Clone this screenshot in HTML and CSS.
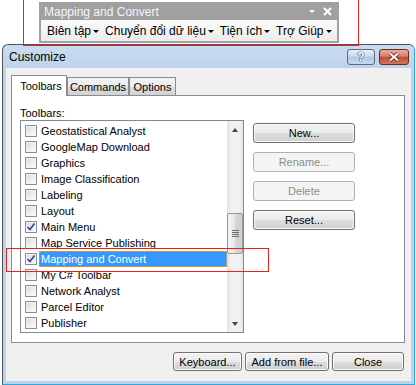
FILE: index.html
```html
<!DOCTYPE html>
<html lang="vi">
<head>
  <meta charset="UTF-8">
  <meta name="viewport" content="width=device-width, initial-scale=1.0">
  <title>Customize</title>
  <link rel="stylesheet" href="styles.css">
</head>
<body>
  <div class="toolbar">
    <div class="toolbar-title">
      <span>Mapping and Convert</span>
      <svg class="toolbar-ctrls" width="24" height="10" viewBox="0 0 24 10">
        <path d="M0 3 L6 3 L3 6 Z" fill="#fff"/>
        <path d="M15 1 L22 8 M22 1 L15 8" stroke="#fff" stroke-width="2.2"/>
      </svg>
    </div>
    <div class="toolbar-menu">
      <span class="menu-item">Biên tập<i class="caret"></i></span>
      <span class="menu-item">Chuyển đổi dữ liệu<i class="caret"></i></span>
      <span class="menu-item">Tiện ích<i class="caret"></i></span>
      <span class="menu-item">Trợ Giúp<i class="caret"></i></span>
    </div>
  </div>

  <div class="dialog">
    <div class="dialog-title">
      <span>Customize</span>
      <div class="caption-btns">
        <div class="cap cap-help">?</div>
        <div class="cap cap-close">
          <svg width="12" height="10" viewBox="0 0 12 10">
            <path d="M2 1.5 L10 8.5 M10 1.5 L2 8.5" stroke="#5a1d12" stroke-width="3.6"/>
            <path d="M2 1.5 L10 8.5 M10 1.5 L2 8.5" stroke="#fff" stroke-width="2"/>
          </svg>
        </div>
      </div>
    </div>

    <div class="dialog-body">
      <div class="tabs">
        <div class="tab active" style="width: 56px;">Toolbars</div>
        <div class="tab" style="width: 62px;">Commands</div>
        <div class="tab" style="width: 47px;">Options</div>
      </div>
      <div class="panel">
        <div class="panel-label">Toolbars:</div>
        <div class="panel-main">
          <div class="list">
            <div class="items" id="items"></div>
            <div class="scroll">
              <div class="scroll-btn"><i class="arrow-up"></i></div>
              <div class="scroll-track">
                <div class="thumb">
                  <svg width="7" height="7" viewBox="0 0 7 7">
                    <path d="M0 0.5 H7 M0 2.5 H7 M0 4.5 H7 M0 6.5 H7" stroke="#6b6b6b" stroke-width="1"/>
                  </svg>
                </div>
              </div>
              <div class="scroll-btn"><i class="arrow-down"></i></div>
            </div>
          </div>
          <div class="side-btns">
            <div class="btn">New...</div>
            <div class="btn disabled">Rename...</div>
            <div class="btn disabled">Delete</div>
            <div class="btn">Reset...</div>
          </div>
        </div>
      </div>
      <div class="footer">
        <div class="btn" style="width: 69px;">Keyboard...</div>
        <div class="btn" style="width: 84px;">Add from file...</div>
        <div class="btn" style="width: 72px;">Close</div>
      </div>
    </div>
  </div>

  <div class="mark mark-toolbar"></div>
  <div class="mark mark-row"></div>

  <script>
    const toolbars = [
      ["Geostatistical Analyst", false],
      ["GoogleMap Download", false],
      ["Graphics", false],
      ["Image Classification", false],
      ["Labeling", false],
      ["Layout", false],
      ["Main Menu", true],
      ["Map Service Publishing", false],
      ["Mapping and Convert", true, true],
      ["My C# Toolbar", false],
      ["Network Analyst", false],
      ["Parcel Editor", false],
      ["Publisher", false]
    ];
    const tick = '<svg width="10" height="10" viewBox="0 0 10 10"><path d="M1.5 5 L4 7.5 L8.5 1.5" fill="none" stroke="#2b4a9b" stroke-width="1.7"/></svg>';
    const list = document.getElementById("items");
    toolbars.forEach(function (t) {
      const row = document.createElement("div");
      row.className = "row";
      row.innerHTML = '<span class="check">' + (t[1] ? tick : "") + '</span>' +
        '<span class="row-text' + (t[2] ? ' selected' : '') + '">' + t[0] + '</span>';
      list.appendChild(row);
    });
  </script>
</body>
</html>
```

FILE: styles.css
```css
* {
  box-sizing: border-box;
}
body {
  margin: 0;
  width: 416px;
  height: 385px;
  overflow: hidden;
  position: relative;
  background: #ffffff;
  font-family: "Liberation Sans", Arial, sans-serif;
  font-size: 11px;
  color: #000;
}

/* floating toolbar */
.toolbar {
  margin: 2px 0 0 39px;
  width: 300px;
  background: #a0a0a0;
  padding: 1px 2px 2px;
}
.toolbar-title {
  height: 17px;
  display: flex;
  align-items: center;
  justify-content: space-between;
  padding: 0 4px 0 3px;
  color: #f6f6f6;
  font-size: 12px;
}
.toolbar-menu {
  height: 21px;
  display: flex;
  align-items: center;
  gap: 6px;
  padding-left: 6px;
  font-size: 12px;
  white-space: nowrap;
  background: linear-gradient(#fbfbfb, #ececec);
}
.menu-item {
  display: flex;
  align-items: center;
  flex-shrink: 0;
}
.caret {
  width: 0;
  height: 0;
  margin: 1px 0 0 2px;
  border-left: 3px solid transparent;
  border-right: 3px solid transparent;
  border-top: 3px solid #000;
}

/* dialog window */
.dialog {
  margin: 1px 0 0 2px;
  width: 413px;
  border: 1px solid #4a5361;
  border-right-color: #2fa6de;
  border-bottom-color: #2fa6de;
  border-radius: 6px 6px 0 0;
  background: linear-gradient(#cadcf1, #bdd3eb 24px, #bcd3ec);
  padding: 0 3px 3px;
}
.dialog-title {
  height: 23px;
  display: flex;
  align-items: center;
  justify-content: space-between;
  padding-left: 3px;
  font-size: 12px;
}
.caption-btns {
  display: flex;
  gap: 4px;
  margin: 1px 2px 0 0;
}
.cap {
  height: 16px;
  border: 1px solid #5b6a80;
  border-radius: 3px;
  display: flex;
  align-items: center;
  justify-content: center;
}
.cap-help {
  width: 28px;
  background: linear-gradient(#e4edf8, #cbdaee 45%, #b2c7e1 50%, #c4d8ef);
  color: #fff;
  font-weight: bold;
  font-size: 12px;
  text-shadow: 0 0 1px #2d3d55, 0 0 1px #2d3d55, 0 0 1px #2d3d55;
}
.cap-close {
  width: 30px;
  border-color: #6e2a1c;
  background: linear-gradient(#eaaa9c, #d6826f 45%, #c1482f 50%, #d27660);
}

.dialog-body {
  height: 313px;
  background: #f0f0f0;
  padding: 7px 6px 0 5px;
}
.tabs {
  display: flex;
  align-items: flex-end;
  height: 20px;
}
.tab {
  height: 18px;
  border: 1px solid #898c95;
  border-bottom: none;
  background: linear-gradient(#f3f3f3, #ebebeb 50%, #dddddd 51%, #d2d2d2);
  display: flex;
  align-items: center;
  justify-content: center;
  white-space: nowrap;
}
.tab.active {
  position: relative;
  z-index: 1;
  height: 21px;
  margin-bottom: -1px;
  background: #ffffff;
  padding-left: 4px;
}
.panel {
  height: 248px;
  border: 1px solid #898c95;
  background: #ffffff;
  padding: 10px 0 0 8px;
}
.panel-label {
  height: 14px;
  line-height: 14px;
}
.panel-main {
  display: flex;
  align-items: flex-start;
}

/* list with checkboxes */
.list {
  width: 224px;
  height: 213px;
  border: 1px solid #828790;
  display: flex;
}
.items {
  flex: 1;
  padding-top: 2px;
}
.row {
  height: 16px;
  display: flex;
  align-items: center;
  padding-left: 4px;
}
.check {
  width: 12px;
  height: 12px;
  border: 1px solid #8e8f8f;
  background: linear-gradient(135deg, #d8d8d8, #f4f4f4 70%, #ffffff);
  box-shadow: inset 0 0 0 1px #f4f4f4;
  display: flex;
  align-items: center;
  justify-content: center;
}
.row-text {
  flex: 1;
  height: 16px;
  line-height: 14px;
  margin-left: 2px;
  padding-left: 1px;
  border: 1px solid transparent;
  white-space: nowrap;
}
.row-text.selected {
  background: #3399ff;
  color: #ffffff;
  border: 1px dotted #e8a040;
}
.scroll {
  width: 16px;
  display: flex;
  flex-direction: column;
  background: linear-gradient(90deg, #e2e2e2, #f1f1f1 25%, #f1f1f1 75%, #e6e6e6);
}
.scroll-btn {
  height: 17px;
  display: flex;
  align-items: center;
  justify-content: center;
}
.arrow-up,
.arrow-down {
  width: 0;
  height: 0;
  border-left: 3px solid transparent;
  border-right: 3px solid transparent;
}
.arrow-up {
  border-bottom: 4px solid #444;
}
.arrow-down {
  border-top: 4px solid #444;
}
.scroll-track {
  flex: 1;
}
.thumb {
  margin: 75px 0 0 0;
  height: 41px;
  border: 1px solid #979797;
  border-radius: 2px;
  background: linear-gradient(90deg, #f4f4f4, #e6e6e6 50%, #d4d4d4 55%, #cfcfcf);
  display: flex;
  align-items: center;
  justify-content: center;
}

/* buttons */
.btn {
  height: 20px;
  border: 1px solid #707070;
  border-radius: 3px;
  background: linear-gradient(#f2f2f2, #ebebeb 50%, #dddddd 51%, #cfcfcf);
  box-shadow: inset 0 0 0 1px #fbfbfb;
  display: flex;
  align-items: center;
  justify-content: center;
  white-space: nowrap;
}
.btn.disabled {
  border-color: #adb2b5;
  background: #f4f4f4;
  box-shadow: none;
  color: #8d8d8d;
}
.side-btns {
  width: 102px;
  margin: 3px 0 0 9px;
  display: flex;
  flex-direction: column;
  gap: 9px;
}
.footer {
  display: flex;
  justify-content: flex-end;
  gap: 3px;
  margin-top: 9px;
  padding-right: 1px;
}
.footer .btn {
  height: 19px;
}

/* red annotation boxes */
.mark {
  position: absolute;
  border: 1px solid #e52222;
}
.mark-toolbar {
  left: 23px;
  top: -2px;
  width: 336px;
  height: 48px;
}
.mark-row {
  left: 6px;
  top: 248px;
  width: 263px;
  height: 24px;
}
```
